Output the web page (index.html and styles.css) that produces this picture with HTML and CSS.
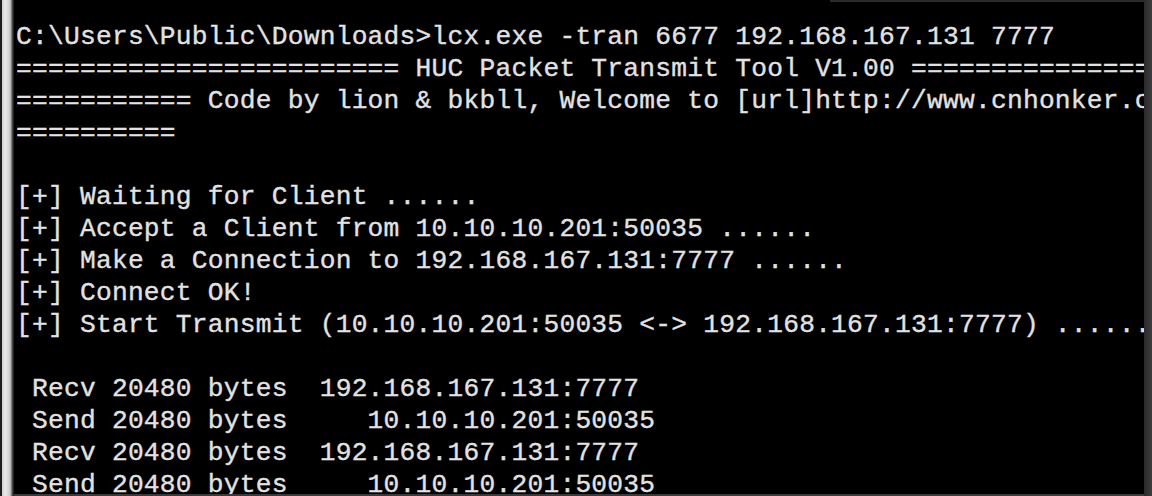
FILE: index.html
```html
<!DOCTYPE html>
<html>
<head>
<meta charset="utf-8">
<link rel="stylesheet" href="styles.css">
</head>
<body>
<div class="window">
  <div class="edge-left"></div>
  <div class="console">
<pre class="out">C:\Users\Public\Downloads>lcx.exe -tran 6677 192.168.167.131 7777
======================== HUC Packet Transmit Tool V1.00 =======================
=========== Code by lion &amp; bkbll, Welcome to [url]http://www.cnhonker.com ==========
==========

[+] Waiting for Client ......
[+] Accept a Client from 10.10.10.201:50035 ......
[+] Make a Connection to 192.168.167.131:7777 ......
[+] Connect OK!
[+] Start Transmit (10.10.10.201:50035 &lt;-&gt; 192.168.167.131:7777) ......

 Recv 20480 bytes  192.168.167.131:7777
 Send 20480 bytes     10.10.10.201:50035
 Recv 20480 bytes  192.168.167.131:7777
 Send 20480 bytes     10.10.10.201:50035</pre>
  </div>
  <div class="edge-right"></div>
</div>
</body>
</html>
```
FILE: styles.css
```css
html, body {
  margin: 0;
  padding: 0;
  background: #000;
}
body {
  width: 1152px;
  height: 496px;
  overflow: hidden;
}
.window {
  display: flex;
  height: 496px;
}
.edge-left {
  width: 14px;
  flex: none;
  background: linear-gradient(to right, #1c1c1c 0, #1c1c1c 2px, #cdcdcd 2px, #e9e9e9 5px, #d4d4d4 9px, #a9a9a9 11px, #555 12px, #111 14px);
}
.console {
  flex: 1;
  min-width: 0;
  overflow: hidden;
  background: #000;
  border-bottom: 2px solid #3a3a3a;
  padding: 21px 0 0 2px;
  position: relative;
}
.console::before {
  content: "";
  position: absolute;
  top: 0;
  left: 816px;
  right: 0;
  height: 2px;
  background: #2b2b2b;
}
.out {
  margin: 0;
  font-family: "Liberation Mono", "DejaVu Sans Mono", monospace;
  font-size: 26.25px;
  letter-spacing: 0.23px;
  line-height: 32px;
  color: #e2e2e2;
  -webkit-text-stroke: 0.35px #e2e2e2;
  white-space: pre;
}
.edge-right {
  width: 8px;
  flex: none;
  background: linear-gradient(to right, #2a2a2a, #3d3d3d);
}
```
